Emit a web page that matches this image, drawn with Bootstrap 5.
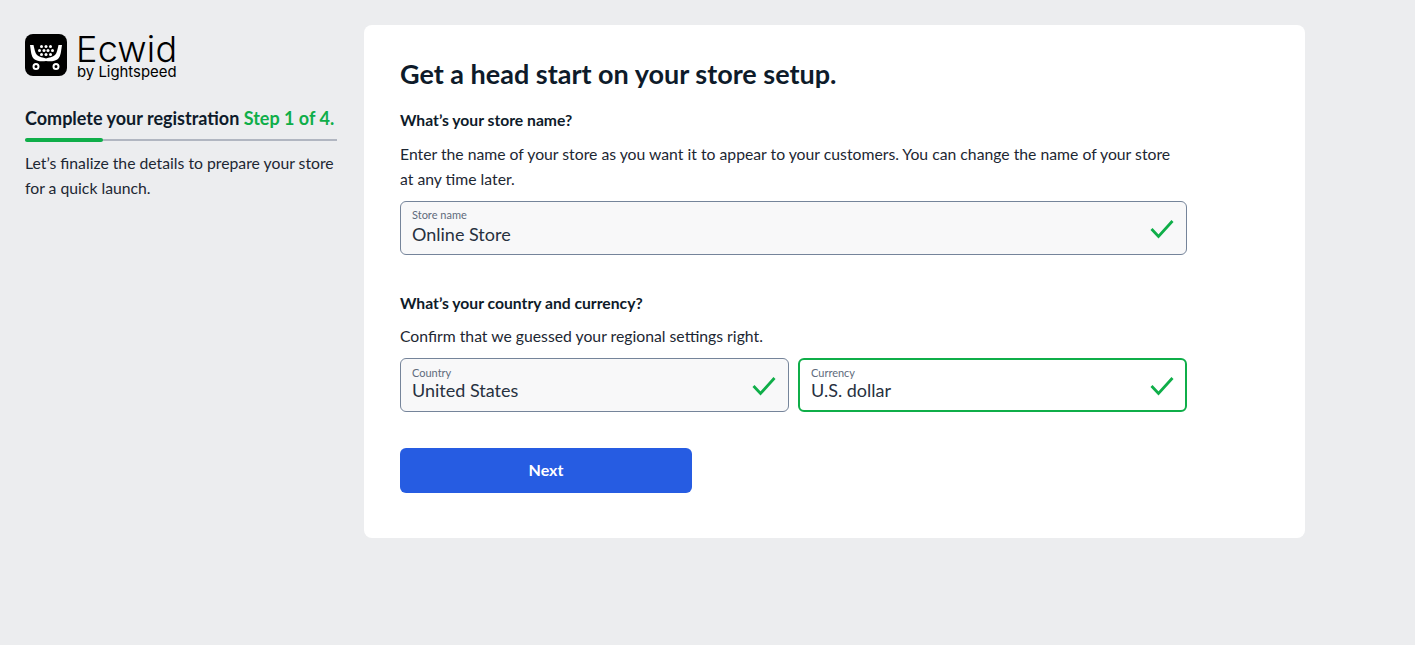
<!DOCTYPE html>
<html lang="en">
<head>
  <meta charset="UTF-8" />
  <meta name="viewport" content="width=device-width, initial-scale=1.0"/>
  <title>Ecwid registration</title>
  <link href="https://cdn.jsdelivr.net/npm/bootstrap@5.3.2/dist/css/bootstrap.min.css" rel="stylesheet">
  <style>
    body { background: #ecedef; font-family: Lato, "Open Sans", sans-serif; color: #0e1b2a; min-height: 645px; }
    .page-wrap { padding: 25px 0 0 25px; gap: 27px; }
    .side-col { width: 312px; flex: none; }
    .logo-box { height: 52px; margin-top: 9px; gap: 10px; }
    .logo-name { font-family: Inter, sans-serif; font-size: 36px; line-height: 26px; font-weight: 300; letter-spacing: .2px; color: #000; margin-top: 2px; margin-left: -1px; }
    .logo-sub { font-family: Inter, sans-serif; font-size: 14.9px; line-height: 15px; color: #000; margin-top: 3px; white-space: nowrap; }
    .reg-title { font-size: 18px; line-height: 24px; font-weight: 700; margin-top: 20px; white-space: nowrap; }
    .reg-step { color: #0fae49; }
    .step-track { height: 2px; background: #b1b6c1; margin-top: 9px; }
    .step-fill { height: 4px; width: 78px; background: #0fae49; border-radius: 2px; position: relative; top: -1px; }
    .side-text { font-size: 15.75px; line-height: 25px; margin-top: 9px; color: #1d2733; }
    .main-card { width: 941px; height: 513px; flex: none; border: 0; border-radius: 8px; padding: 31px 36px; }
    .main-title { font-size: 27px; line-height: 36px; font-weight: 700; margin: 0 0 16px; }
    .q-title { font-size: 15.7px; line-height: 24px; font-weight: 700; margin: 0 0 9px; }
    .q-title-tight { margin-bottom: 8px; }
    .q-text { font-size: 15.75px; line-height: 25px; margin: 0 0 10px; color: #1d2733; }
    .form-area { width: 787px; }
    .fld-gap { margin-bottom: 36px; }
    .fld-pair { gap: 9px; }
    .fld-cell { flex: 1 1 0; }
    .fld { height: 54px; border: 1px solid #75849a; border-radius: 6px; background: #f8f8f9; padding: 6px 11px 0; position: relative; }
    .fld-pair .fld { padding-top: 7px; }
    .fld-pair .fld-active { border: 2px solid #0fae49; background: #fff; padding: 6px 11px 0; }
    .fld-label { font-size: 11px; line-height: 14px; color: #606b7c; }
    .fld-value { font-size: 18px; line-height: 24px; color: #27313f; }
    .fld-pair .fld-value { line-height: 20px; }
    .fld-check { position: absolute; right: 12px; top: 17px; width: 24px; height: 20px; }
    .fld-active .fld-check { right: 11px; top: 16px; }
    .next-btn { width: 292px; height: 45px; background: #265ce2; border: 0; border-radius: 6px; font-size: 16px; font-weight: 700; color: #fff; margin-top: 36px; padding: 5px 12px 7px; }
    .next-btn:hover { background: #1f4fc7; color: #fff; }
  </style>
</head>
<body>

  <div class="d-flex align-items-start page-wrap">
    <div class="side-col">
      <div class="d-flex align-items-start logo-box">
        <svg width="42" height="42" viewBox="0 0 42 42" aria-hidden="true">
          <rect width="42" height="42" rx="8" fill="#000"/>
          <path d="M5 11 L8.500 11 C9.500 15 10 19 12 21 C14 23 18 23.500 21 24.500 C24 23.500 28 23 30 21 C32 19 32.500 15 33.500 11 L37 11 C36 17 36 22 33 25 C30 27.500 25 27.500 21 27 C17 27.500 12 27.500 9 25 C6 22 6 17 5 11 Z" fill="#fff"/>
          <g fill="#fff">
            <circle cx="16.500" cy="12.500" r="1.500"/><circle cx="21" cy="12.500" r="1.500"/><circle cx="25.500" cy="12.500" r="1.500"/>
            <circle cx="14.500" cy="16.500" r="1.500"/><circle cx="19" cy="16.500" r="1.500"/><circle cx="23" cy="16.500" r="1.500"/><circle cx="27.500" cy="16.500" r="1.500"/>
            <circle cx="16.500" cy="20.500" r="1.500"/><circle cx="21" cy="20.500" r="1.500"/><circle cx="25.500" cy="20.500" r="1.500"/>
          </g>
          <circle cx="11" cy="32.500" r="2.500" fill="#000" stroke="#fff" stroke-width="2"/>
          <circle cx="31" cy="32.500" r="2.500" fill="#000" stroke="#fff" stroke-width="2"/>
        </svg>
        <div>
          <div class="logo-name">Ecwid</div>
          <div class="logo-sub">by Lightspeed</div>
        </div>
      </div>
      <div class="reg-title">Complete your registration <span class="reg-step">Step 1 of 4.</span></div>
      <div class="step-track"><div class="step-fill"></div></div>
      <div class="side-text">Let’s finalize the details to prepare your store for a quick launch.</div>
    </div>

    <div class="card main-card">
      <h1 class="main-title">Get a head start on your store setup.</h1>
      <div class="form-area">
        <h2 class="q-title">What’s your store name?</h2>
        <p class="q-text">Enter the name of your store as you want it to appear to your customers. You can change the name of your store at any time later.</p>
        <div class="fld fld-gap">
          <div class="fld-label">Store name</div>
          <div class="fld-value">Online Store</div>
          <svg class="fld-check" viewBox="0 0 24 20"><path d="M1.500 10 L8.500 17.500 L22.500 2" fill="none" stroke="#0fae49" stroke-width="2.800"/></svg>
        </div>
        <h2 class="q-title q-title-tight">What’s your country and currency?</h2>
        <p class="q-text">Confirm that we guessed your regional settings right.</p>
        <div class="d-flex fld-pair">
          <div class="fld-cell">
            <div class="fld">
              <div class="fld-label">Country</div>
              <div class="fld-value">United States</div>
              <svg class="fld-check" viewBox="0 0 24 20"><path d="M1.500 10 L8.500 17.500 L22.500 2" fill="none" stroke="#0fae49" stroke-width="2.800"/></svg>
            </div>
          </div>
          <div class="fld-cell">
            <div class="fld fld-active">
              <div class="fld-label">Currency</div>
              <div class="fld-value">U.S. dollar</div>
              <svg class="fld-check" viewBox="0 0 24 20"><path d="M1.500 10 L8.500 17.500 L22.500 2" fill="none" stroke="#0fae49" stroke-width="2.800"/></svg>
            </div>
          </div>
        </div>
        <button type="button" class="btn next-btn">Next</button>
      </div>
    </div>
  </div>

  <script src="https://cdn.jsdelivr.net/npm/bootstrap@5.3.2/dist/js/bootstrap.bundle.min.js"></script>
</body>
</html>
